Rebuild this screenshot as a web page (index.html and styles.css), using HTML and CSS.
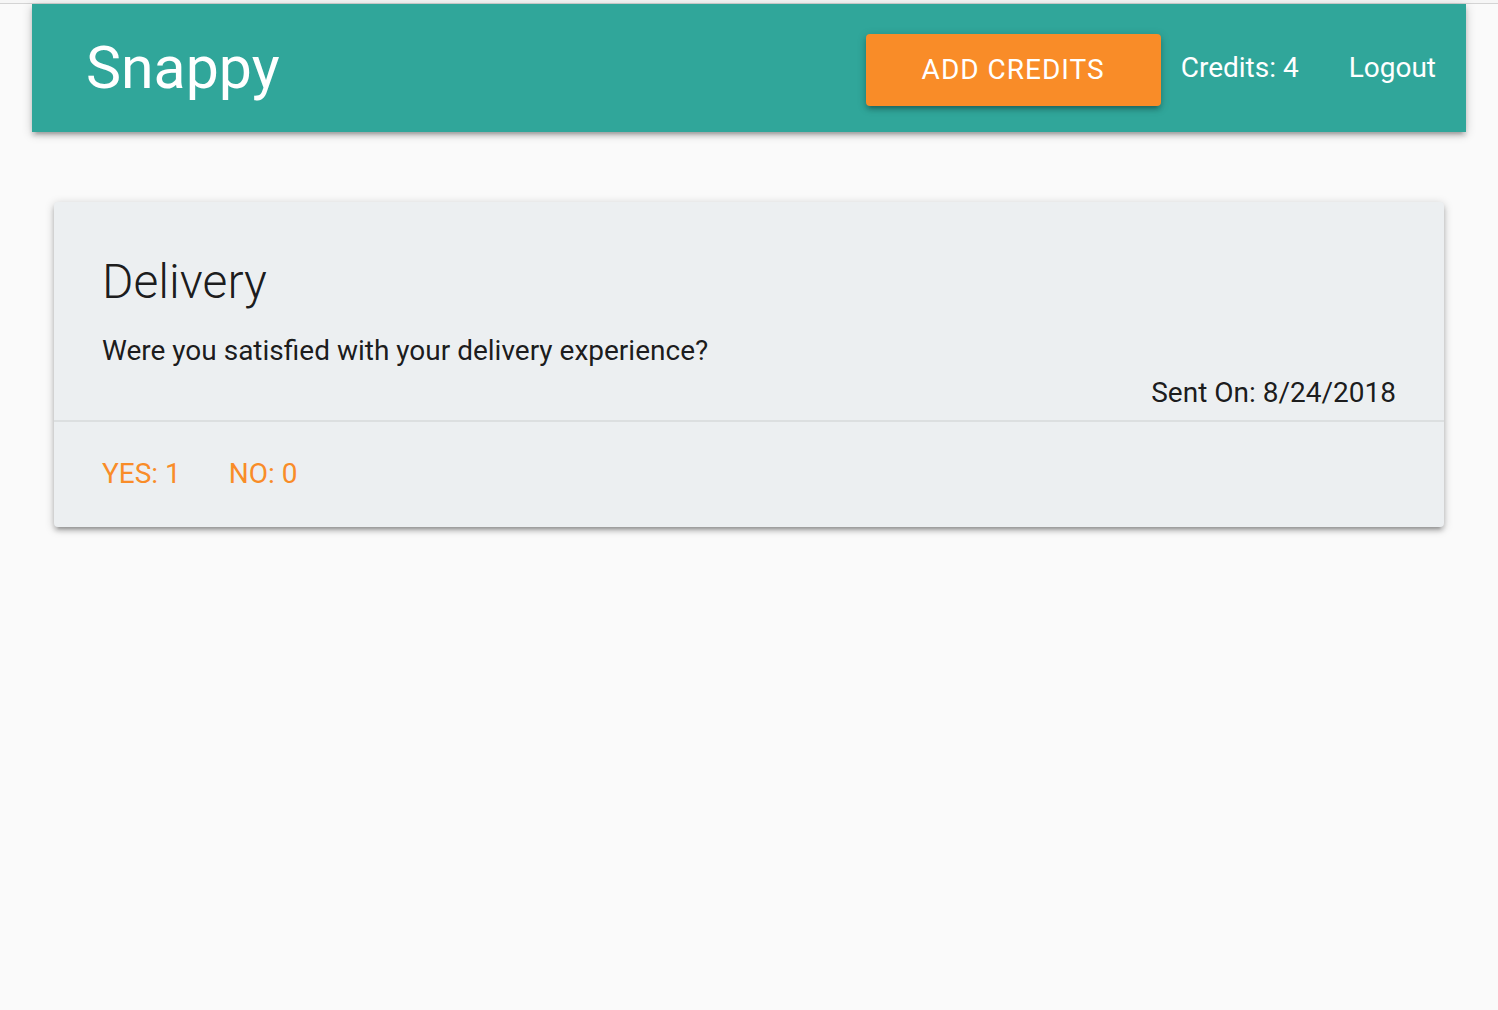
FILE: index.html
```html
<!DOCTYPE html>
<html>
<head>
<meta charset="utf-8">
<title>Snappy</title>
<link rel="stylesheet" href="styles.css">
</head>
<body>
<div class="topline"></div>
<div class="container">
  <nav class="navbar">
    <a class="brand" href="#">Snappy</a>
    <ul class="menu">
      <li><button class="btn">ADD CREDITS</button></li>
      <li class="credits">Credits: 4</li>
      <li><a class="link" href="#">Logout</a></li>
    </ul>
  </nav>
  <div class="list">
    <div class="card">
      <div class="card-content">
        <span class="card-title">Delivery</span>
        <p>Were you satisfied with your delivery experience?</p>
        <p class="right">Sent On: 8/24/2018</p>
      </div>
      <div class="card-action">
        <a href="#">Yes: 1</a>
        <a href="#">No: 0</a>
      </div>
    </div>
  </div>
</div>
</body>
</html>
```
FILE: styles.css
```css
html, body {
  margin: 0;
  padding: 0;
}
body {
  background: #fafafa;
  font-family: Roboto, "Liberation Sans", sans-serif;
  color: rgba(0, 0, 0, 0.9);
  font-size: 28px;
  line-height: 1.5;
  min-height: 100vh;
}
.topline {
  height: 3px;
  border-bottom: 1px solid #d4d4d4;
  background: #f6f6f6;
}
.container {
  margin: 0 32px;
  padding-bottom: 40px;
}
.navbar {
  display: flex;
  align-items: center;
  justify-content: space-between;
  height: 128px;
  background: #30a69a;
  color: #fff;
  box-shadow: 0 4px 4px 0 rgba(0,0,0,0.14), 0 6px 2px -4px rgba(0,0,0,0.12), 0 2px 10px 0 rgba(0,0,0,0.2);
}
.brand {
  color: #fff;
  text-decoration: none;
  font-size: 59px;
  padding-left: 54px;
  line-height: 128px;
}
.menu {
  list-style: none;
  margin: 0;
  padding: 0;
  display: flex;
  align-items: center;
  height: 128px;
}
.menu li {
  font-size: 28px;
}
.credits {
  margin: 0 20px;
}
.link {
  display: block;
  color: #fff;
  text-decoration: none;
  padding: 0 30px;
  line-height: 128px;
}
.btn {
  display: block;
  height: 72px;
  margin-top: 3px;
  padding: 0 56px;
  border: none;
  border-radius: 4px;
  background: #f98c28;
  color: #fff;
  font-family: Roboto, "Liberation Sans", sans-serif;
  font-size: 28px;
  letter-spacing: 1px;
  box-shadow: 0 4px 4px 0 rgba(0,0,0,0.14), 0 6px 2px -4px rgba(0,0,0,0.12), 0 2px 10px 0 rgba(0,0,0,0.2);
}
.list {
  padding: 70px 22px 0;
}
.card {
  background: #eceff1;
  border-radius: 4px;
  box-shadow: 0 4px 4px 0 rgba(0,0,0,0.16), 0 6px 2px -4px rgba(0,0,0,0.14), 0 2px 10px 0 rgba(0,0,0,0.22);
}
.card-content {
  padding: 48px;
  position: relative;
}
.card-content p {
  margin: 0;
}
.card-title {
  display: block;
  font-size: 48px;
  font-weight: 300;
  line-height: 64px;
  margin-bottom: 16px;
}
.card-content p.right {
  position: absolute;
  right: 48px;
  top: 170px;
}
.card-action {
  border-top: 2px solid rgba(160,160,160,0.2);
  padding: 31px 48px 32px;
  display: flex;
  gap: 48px;
}
.card-action a {
  color: #f98c28;
  text-decoration: none;
  text-transform: uppercase;
}
```
